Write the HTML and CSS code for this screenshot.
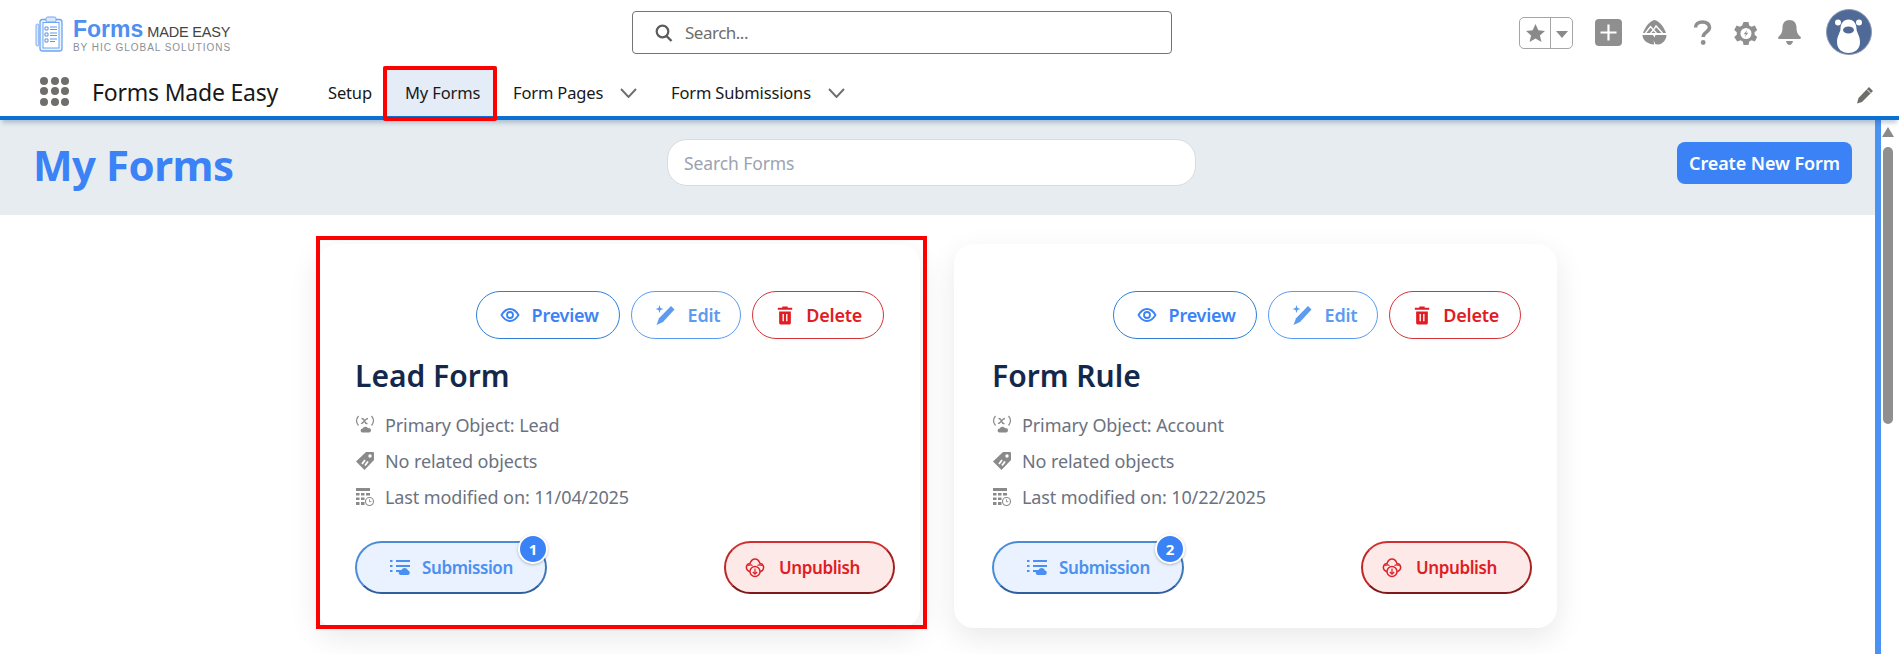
FILE: index.html
```html
<!DOCTYPE html>
<html lang="en">
<head>
  <meta charset="UTF-8">
  <meta name="viewport" content="width=device-width, initial-scale=1.0">
  <title>My Forms</title>
  <link rel="stylesheet" href="styles.css">
</head>
<body>
  <svg class="sprites" width="0" height="0" aria-hidden="true">
    <symbol id="i-eye" viewBox="0 0 20 20">
      <path d="M1.5 10C4 5.8 6.8 4 10 4s6 1.8 8.500 6c-2.500 4.200-5.300 6-8.500 6s-6-1.800-8.500-6z" fill="none" stroke="currentColor" stroke-width="1.800"/>
      <circle cx="10" cy="10" r="3" fill="none" stroke="currentColor" stroke-width="1.800"/>
    </symbol>
    <symbol id="i-edit" viewBox="0 0 22 22">
      <path d="M17 2l3.500 3.500L9 18l-6.500 3 2.500-6.800z" fill="currentColor"/>
      <path d="M5.500 1l1 3 3 1-3 1-1 3-1-3-3-1 3-1z" fill="currentColor"/>
    </symbol>
    <symbol id="i-trash" viewBox="0 0 20 22">
      <path d="M7 3V1.500h6V3h5v2.200H2V3zM3.500 7h13v13a1.500 1.500 0 0 1-1.500 1.500H5A1.500 1.500 0 0 1 3.500 20z" fill="currentColor"/>
      <path d="M8 10v8M12 10v8" stroke="#fff" stroke-width="1.500"/>
    </symbol>
    <symbol id="i-list" viewBox="0 0 22 20">
      <path d="M7 3h14M7 8h14M7 13h6" stroke="currentColor" stroke-width="2.200" fill="none"/>
      <path d="M1 3h2.500M1 8h2.500M1 13h2.500" stroke="currentColor" stroke-width="2.200" fill="none"/>
      <path d="M12 17a2.500 2.500 0 0 1 .5-5 3.500 3.500 0 0 1 6.500.5 2.300 2.300 0 0 1 0 4.500z" fill="currentColor"/>
    </symbol>
    <symbol id="i-unpub" viewBox="0 0 20 22">
      <path d="M5.500 15C2.500 14 1 12 1.500 9.500 2 7.500 3.500 6.500 5 6.500 6 3.500 8 2 10 2s4 1.500 5 4.500c1.500 0 3 1 3.500 3 .5 2.500-1 4.500-4 5.500" fill="none" stroke="currentColor" stroke-width="1.500"/>
      <path d="M3 8.500c2-1 3-1 4.500 0M12.500 8.500c1.500-1 2.500-1 4.500 0" fill="none" stroke="currentColor" stroke-width="1.100"/>
      <circle cx="10" cy="14.500" r="5" fill="#fdeae8" stroke="currentColor" stroke-width="1.400"/>
      <path d="M10 11.500v5.500M7.800 15l2.200 2.200 2.200-2.200" fill="none" stroke="currentColor" stroke-width="1.200"/>
    </symbol>
    <symbol id="i-var" viewBox="0 0 20 20">
      <path d="M3.500 1C1 4 1 7.500 3.500 10.500M16.500 1c2.500 3 2.500 6.500 0 9.500" fill="none" stroke="currentColor" stroke-width="1.200"/>
      <path d="M6.500 3.500c2 0 2.500 1 3 2.500s1 3 3 2.500M13 3.500c-2 0-3.500 2.500-4 3S7 8.800 6 8.300" fill="none" stroke="currentColor" stroke-width="1.300"/>
      <path d="M7.500 17.500a2 2 0 0 1 .2-4 3 3 0 0 1 5.300-.3 2.200 2.200 0 0 1 1.500 4.300z" fill="currentColor"/>
    </symbol>
    <symbol id="i-tag" viewBox="0 0 20 20">
      <path d="M11 1h7a1 1 0 0 1 1 1v7L9.500 19 1 10.500z" fill="currentColor"/>
      <circle cx="15" cy="5" r="1.700" fill="#fff"/>
      <path d="M7 13l3-4M10 14.500l3-4" stroke="#fff" stroke-width="1.800"/>
    </symbol>
    <symbol id="i-table" viewBox="0 0 20 20">
      <path d="M1 1h14v3H1z" fill="currentColor"/>
      <path d="M1 6h3.500v2.500H1zM6 6h3.500v2.500H6zM11 6h4v2.500h-4zM1 10.500h3.500V13H1zM6 10.500h3.500V13H6zM1 15h3.500v3H1zM6 15h3.500v3H6z" fill="currentColor"/>
      <circle cx="14.500" cy="14.500" r="4" fill="#fff" stroke="currentColor" stroke-width="1.100"/>
      <path d="M14.500 12.300v2.400h1.800" fill="none" stroke="currentColor" stroke-width=".9"/>
    </symbol>
  </svg>

  <header class="top-bar">
    <a class="logo">
      <svg class="logo-icon" viewBox="0 0 28 36">
        <rect x="5" y="3.500" width="22" height="31.500" rx="2.500" fill="#eaf2fe" stroke="#6fa5f2" stroke-width="1.300"/>
        <rect x="8" y="6.500" width="16" height="25.500" fill="#fff" stroke="#6fa5f2"/>
        <rect x="11" y="1" width="10" height="5" rx="1.500" fill="#dbe8fc" stroke="#6fa5f2"/>
        <path d="M10 11h3v3h-3zM10 17h3v3h-3zM10 23h3v3h-3z" fill="none" stroke="#5b97ef"/>
        <path d="M15 11h7M15 13.500h7M15 17h7M15 19.500h7M15 23h7M15 25.500h5" stroke="#5b97ef"/>
        <rect x="1" y="8" width="2.800" height="22" rx="1.400" fill="#dbe8fc" stroke="#6fa5f2" stroke-width=".9"/>
      </svg>
      <div class="logo-text">
        <div class="logo-main"><b>Forms</b><span>MADE EASY</span></div>
        <div class="logo-sub">BY HIC GLOBAL SOLUTIONS</div>
      </div>
    </a>
    <div class="global-search">
      <svg viewBox="0 0 18 18" width="18" height="18">
        <circle cx="7.500" cy="7.500" r="5.800" fill="none" stroke="#5c5c5c" stroke-width="2.200"/>
        <path d="M11.500 12l5 5" stroke="#5c5c5c" stroke-width="2.400"/>
      </svg>
      <span>Search...</span>
    </div>
    <div class="utility">
      <div class="fav-btn">
        <span class="fav-star">
          <svg viewBox="0 0 20 20" width="21" height="21"><path d="M10 1l2.700 6 6.300.6-4.800 4.200 1.500 6.400L10 14.800l-5.700 3.400 1.500-6.400L1 7.600 7.300 7z" fill="#8a8a8a"/></svg>
        </span>
        <span class="fav-drop"></span>
      </div>
      <svg class="util-plus" viewBox="0 0 27 27" width="27" height="27">
        <rect width="27" height="27" rx="4" fill="#8f8f8f"/>
        <path d="M13.500 5.500v16M5.500 13.500h16" stroke="#fff" stroke-width="2.200"/>
      </svg>
      <svg class="util-trail" viewBox="0 0 25 25" width="25" height="25">
        <path d="M12.500 0C8 1 3.500 6 1 13h23C21.500 6 17 1 12.500 0z" fill="#8f8f8f"/>
        <path d="M3.500 13l5-6.500 3 3.500 2.500-4 6.500 7M8.500 13l3-3 3 3" fill="none" stroke="#fff" stroke-width="1.400"/>
        <path d="M.5 15h10.500l1.500 2.500 1-2.500h11c0 5-4 9-8 9.500l-3-.2-2-4 .7 4.200C5 24 .5 20 .5 15z" fill="#8f8f8f"/>
      </svg>
      <svg class="util-help" viewBox="0 0 19 25" width="19" height="25">
        <path d="M2.500 7.500C2.500 4 5.500 2 9.500 2S16.500 4.200 16.500 7.300c0 4.700-6.300 5-6.300 9.700" fill="none" stroke="#8f8f8f" stroke-width="3.600"/>
        <circle cx="10.200" cy="22.500" r="2.400" fill="#8f8f8f"/>
      </svg>
      <svg class="util-gear" viewBox="0 0 24 25" width="24" height="25">
        <path d="M9.500 0h5l.7 3.400 2.300 1.300 3.300-1.100 2.400 4.300-2.600 2.300v2.600l2.600 2.300-2.400 4.300-3.300-1.100-2.300 1.300-.7 3.400h-5l-.7-3.400-2.300-1.300-3.300 1.100L.2 15.100l2.600-2.300v-2.600L.2 7.900l2.400-4.300 3.300 1.100 2.300-1.300z" fill="#8f8f8f" transform="translate(0 1)"/>
        <circle cx="12" cy="12.500" r="5.500" fill="#fff"/>
        <path d="M13.500 8.500l-3.800 4.700h2.300l-1.500 3.300 3.800-4.700h-2.300z" fill="#8f8f8f"/>
      </svg>
      <svg class="util-bell" viewBox="0 0 25 25" width="25" height="25">
        <path d="M12.500 0c4.500 0 7 3 7 7.500 0 5 1.500 7 4 9.300.8.800.5 2.200-.8 2.200H2.300c-1.300 0-1.600-1.400-.8-2.200 2.500-2.300 4-4.300 4-9.300C5.500 3 8 0 12.500 0z" fill="#8f8f8f"/>
        <path d="M9 21h7c-.5 2.500-2 4-3.500 4S9.500 23.500 9 21z" fill="#8f8f8f"/>
      </svg>
      <svg class="avatar" viewBox="0 0 46 46" width="46" height="46">
        <circle cx="23" cy="23" r="22.500" fill="#4f6a97" stroke="#8c9bb4"/>
        <circle cx="12" cy="13.500" r="3" fill="#fff"/>
        <circle cx="33" cy="13.500" r="3" fill="#fff"/>
        <path d="M22.500 10.500c5 0 8 4 8 9.500 0 3 3.500 7 3.500 13 0 7-5 11-11.500 11S11 40 11 33c0-6 3.500-10 3.500-13 0-5.500 3-9.500 8-9.500z" fill="#fff"/>
        <ellipse cx="22.500" cy="21" rx="5.500" ry="3.500" fill="#4f6a97"/>
      </svg>
    </div>
  </header>

  <nav class="nav-bar">
    <div class="waffle">
      <i></i><i></i><i></i><i></i><i></i><i></i><i></i><i></i><i></i>
    </div>
    <div class="app-name">Forms Made Easy</div>
    <a class="nav-item nav-setup">Setup</a>
    <a class="nav-item nav-active">My Forms<span class="annot annot-tab"></span></a>
    <a class="nav-item nav-pages">Form Pages<svg class="chev" viewBox="0 0 17 10" width="17" height="10"><path d="M1 1l7.500 8L16 1" fill="none" stroke="#706e6b" stroke-width="1.900"/></svg></a>
    <a class="nav-item nav-subs">Form Submissions<svg class="chev" viewBox="0 0 17 10" width="17" height="10"><path d="M1 1l7.500 8L16 1" fill="none" stroke="#706e6b" stroke-width="1.900"/></svg></a>
    <svg class="nav-pencil" viewBox="0 0 18 18" width="18" height="18">
      <path d="M13 1l4 4L6 16l-5 1.500L2.500 12z" fill="#706e6b"/>
      <path d="M11 3.500l3.500 3.500" stroke="#fff" stroke-width="1"/>
    </svg>
  </nav>

  <div class="page">
    <main class="content">
      <section class="page-head">
        <h1>My Forms</h1>
        <div class="form-search">Search Forms</div>
        <button class="create-btn">Create New Form</button>
      </section>

      <section class="cards">
        <article class="card">
          <span class="annot annot-card"></span>
          <div class="card-actions">
            <a class="pill pill-blue"><svg width="20" height="20"><use href="#i-eye"/></svg>Preview</a>
            <a class="pill pill-light"><svg width="22" height="22"><use href="#i-edit"/></svg>Edit</a>
            <a class="pill pill-red"><svg width="18" height="20"><use href="#i-trash"/></svg>Delete</a>
          </div>
          <h2>Lead Form</h2>
          <ul class="meta">
            <li><svg width="20" height="20"><use href="#i-var"/></svg>Primary Object: Lead</li>
            <li><svg width="20" height="20"><use href="#i-tag"/></svg>No related objects</li>
            <li><svg width="20" height="20"><use href="#i-table"/></svg>Last modified on: 11/04/2025</li>
          </ul>
          <div class="card-foot">
            <a class="big-btn big-sub"><svg width="22" height="20"><use href="#i-list"/></svg>Submission<span class="badge">1</span></a>
            <a class="big-btn big-unpub"><svg width="20" height="22"><use href="#i-unpub"/></svg>Unpublish</a>
          </div>
        </article>

        <article class="card">
          <div class="card-actions">
            <a class="pill pill-blue"><svg width="20" height="20"><use href="#i-eye"/></svg>Preview</a>
            <a class="pill pill-light"><svg width="22" height="22"><use href="#i-edit"/></svg>Edit</a>
            <a class="pill pill-red"><svg width="18" height="20"><use href="#i-trash"/></svg>Delete</a>
          </div>
          <h2>Form Rule</h2>
          <ul class="meta">
            <li><svg width="20" height="20"><use href="#i-var"/></svg>Primary Object: Account</li>
            <li><svg width="20" height="20"><use href="#i-tag"/></svg>No related objects</li>
            <li><svg width="20" height="20"><use href="#i-table"/></svg>Last modified on: 10/22/2025</li>
          </ul>
          <div class="card-foot">
            <a class="big-btn big-sub"><svg width="22" height="20"><use href="#i-list"/></svg>Submission<span class="badge">2</span></a>
            <a class="big-btn big-unpub"><svg width="20" height="22"><use href="#i-unpub"/></svg>Unpublish</a>
          </div>
        </article>
      </section>
    </main>

    <div class="stripe"></div>
    <div class="scrollbar">
      <div class="scroll-up"></div>
      <div class="scroll-thumb"></div>
    </div>
  </div>
</body>
</html>
```

FILE: styles.css
```css
* {
  box-sizing: border-box;
}
html, body {
  height: 654px;
  overflow: hidden;
}
body {
  margin: 0;
  background: #fff;
  font-family: 'Noto Sans', 'Open Sans', sans-serif;
  color: #181818;
}
.sprites {
  position: absolute;
}

/* top bar */
.top-bar {
  height: 66px;
  display: grid;
  grid-template-columns: 632px 540px 1fr;
  align-items: start;
}
.logo {
  display: flex;
  padding: 16px 0 0 35px;
  gap: 10px;
}
.logo-icon {
  width: 28px;
  height: 36px;
}
.logo-main {
  display: flex;
  align-items: baseline;
  height: 26px;
  line-height: 26px;
}
.logo-main b {
  font-family: 'Liberation Sans', sans-serif;
  font-size: 23px;
  color: #4f8ff0;
}
.logo-main span {
  font-family: 'Liberation Sans', sans-serif;
  font-size: 14.500px;
  color: #444;
  margin-left: 4px;
  letter-spacing: -0.2px;
}
.logo-sub {
  margin-top: 1px;
  font-family: 'Liberation Sans', sans-serif;
  font-size: 10px;
  line-height: 10px;
  letter-spacing: 0.95px;
  color: #8a8f96;
}
.global-search {
  margin-top: 11px;
  height: 43px;
  border: 1px solid #747474;
  border-radius: 4px;
  display: flex;
  align-items: center;
  gap: 12px;
  padding-left: 22px;
  color: #706e6b;
  font-size: 17px;
  letter-spacing: -0.5px;
}
.utility {
  position: relative;
  height: 66px;
  display: flex;
  align-items: flex-start;
  padding-left: 347px;
}
.fav-btn {
  margin-top: 17px;
  width: 54px;
  height: 32px;
  border: 1px solid #a5a5a5;
  border-radius: 5px;
  display: flex;
}
.fav-star {
  width: 31px;
  border-right: 1px solid #a5a5a5;
  display: flex;
  align-items: center;
  justify-content: center;
}
.fav-drop {
  margin: 13px 0 0 5px;
  width: 0;
  height: 0;
  border-left: 6px solid transparent;
  border-right: 6px solid transparent;
  border-top: 7px solid #8a8a8a;
}
.util-plus {
  margin: 19px 0 0 22px;
}
.util-trail {
  margin: 20px 0 0 20px;
}
.util-help {
  margin: 20px 0 0 26px;
}
.util-gear {
  margin: 21px 0 0 22px;
}
.util-bell {
  margin: 20px 0 0 19px;
}
.avatar {
  margin: 9px 0 0 24px;
}

/* nav */
.nav-bar {
  position: relative;
  z-index: 2;
  height: 54px;
  border-bottom: 4px solid #0b70d0;
  box-shadow: 0 5px 4px -2px rgba(40, 80, 140, 0.28);
  background: #fff;
  display: flex;
  align-items: center;
}
.waffle {
  margin-left: 40px;
  width: 28px;
  display: grid;
  grid-template-columns: repeat(3, 8px);
  grid-auto-rows: 8px;
  gap: 2.500px;
}
.waffle i {
  background: #706e6b;
  border-radius: 50%;
}
.app-name {
  margin-left: 24px;
  width: 236px;
  padding-top: 1px;
  font-size: 23px;
  letter-spacing: -0.2px;
}
.nav-item {
  font-size: 16.500px;
  letter-spacing: -0.15px;
  display: flex;
  align-items: center;
  height: 50px;
  padding-top: 3px;
}
.nav-setup {
  width: 55px;
}
.nav-active {
  position: relative;
  width: 114px;
  padding-left: 22px;
  background: #e4ecf8;
}
.nav-pages {
  margin-left: 16px;
  width: 158px;
}
.chev {
  margin-left: 17px;
}
.nav-pencil {
  position: absolute;
  right: 25px;
  top: 20px;
}

/* red marks drawn on top of the screenshot */
.annot {
  position: absolute;
  border: 4px solid #f00;
  pointer-events: none;
}
.annot-tab {
  left: 0;
  top: 0;
  width: 114px;
  height: 55px;
  border-radius: 2px;
  z-index: 3;
}
.annot-card {
  left: -1px;
  top: -8px;
  width: 611px;
  height: 393px;
  z-index: 3;
}

/* page */
.page {
  display: flex;
  height: 534px;
}
.content {
  width: 1875px;
}
.stripe {
  width: 6px;
  background: #4b92f5;
}
.scrollbar {
  flex: 1;
  padding: 7px 0 0 1px;
}
.scroll-up {
  width: 0;
  height: 0;
  border-left: 6.500px solid transparent;
  border-right: 6.500px solid transparent;
  border-bottom: 10px solid #8a8a8a;
}
.scroll-thumb {
  margin: 10px 0 0 1px;
  width: 10px;
  height: 277px;
  border-radius: 5px;
  background: #8f8f8f;
}
.page-head {
  position: relative;
  height: 95px;
  background: #e6ecef;
  display: flex;
  align-items: center;
  padding: 0 23px 10px 33px;
}
.page-head h1 {
  margin: 4px 0 0;
  width: 634px;
  font-size: 42px;
  font-weight: 700;
  letter-spacing: -0.5px;
  color: #3b82f6;
}
.form-search {
  width: 529px;
  height: 47px;
  background: #fff;
  border: 1px solid #d8dcdf;
  border-radius: 20px;
  padding-left: 16px;
  display: flex;
  align-items: center;
  font-size: 17.500px;
  letter-spacing: -0.1px;
  color: #9ca3af;
}
.create-btn {
  margin-left: auto;
  width: 175px;
  height: 42px;
  border: 0;
  border-radius: 8px;
  background: #3b82f6;
  color: #fff;
  font-family: inherit;
  font-size: 18px;
  font-weight: 600;
  letter-spacing: -0.1px;
}

/* cards */
.cards {
  display: flex;
  gap: 34px;
  padding: 29px 0 0 317px;
}
.card {
  position: relative;
  width: 603px;
  height: 384px;
  background: #fff;
  border-radius: 20px;
  box-shadow: 0 10px 30px rgba(0, 0, 0, 0.09);
  padding: 47px 25px 0 38px;
}
.card-actions {
  display: flex;
  justify-content: flex-end;
  gap: 11px;
  padding-right: 11px;
}
.pill {
  height: 48px;
  border: 1px solid;
  border-radius: 24px;
  padding: 0 21px 0 23px;
  display: flex;
  align-items: center;
  gap: 12px;
  font-size: 18px;
  font-weight: 600;
  letter-spacing: -0.25px;
}
.pill-blue {
  padding-right: 20px;
  color: #3b82f6;
  border-color: #2f7fd8;
}
.pill-light {
  padding: 0 20px 0 22px;
  color: #5b9bf2;
  border-color: #5b9bf2;
}
.pill-red {
  color: #e11d24;
  border-color: #d6343a;
}
.card h2 {
  margin: 17px 0 0;
  font-size: 30px;
  line-height: 40px;
  font-weight: 600;
  color: #14284b;
}
.meta {
  list-style: none;
  margin: 11px 0 0;
  padding: 0;
}
.meta li {
  height: 36px;
  display: flex;
  align-items: center;
  gap: 10px;
  font-size: 18px;
  letter-spacing: -0.1px;
  color: #6b7280;
}
.meta svg {
  color: #8a8a8a;
}
.card-foot {
  margin-top: 26px;
  display: flex;
  justify-content: space-between;
}
.big-btn {
  position: relative;
  height: 53px;
  border: 2px solid;
  border-radius: 27px;
  display: flex;
  align-items: center;
  font-size: 17px;
  font-weight: 600;
  letter-spacing: -0.4px;
}
.big-sub {
  width: 192px;
  padding-left: 32px;
  gap: 11px;
  color: #4b8ff0;
  background: #e9f2fe;
  border-color: #4a8cd8 #3f78b8 #2f5f9e #4a8cd8;
}
.big-unpub {
  width: 171px;
  padding-left: 19px;
  gap: 14px;
  color: #e11d24;
  background: #fdeae8;
  border-color: #d13030 #a52020 #7f1818 #c02828;
}
.badge {
  position: absolute;
  right: -3px;
  top: -9px;
  width: 30px;
  height: 30px;
  border: 2px solid #fff;
  border-radius: 50%;
  background: #3b82f6;
  color: #fff;
  font-size: 15px;
  font-weight: 700;
  letter-spacing: 0;
  display: flex;
  align-items: center;
  justify-content: center;
  box-shadow: 0 1px 3px rgba(0, 0, 0, 0.25);
}
```
